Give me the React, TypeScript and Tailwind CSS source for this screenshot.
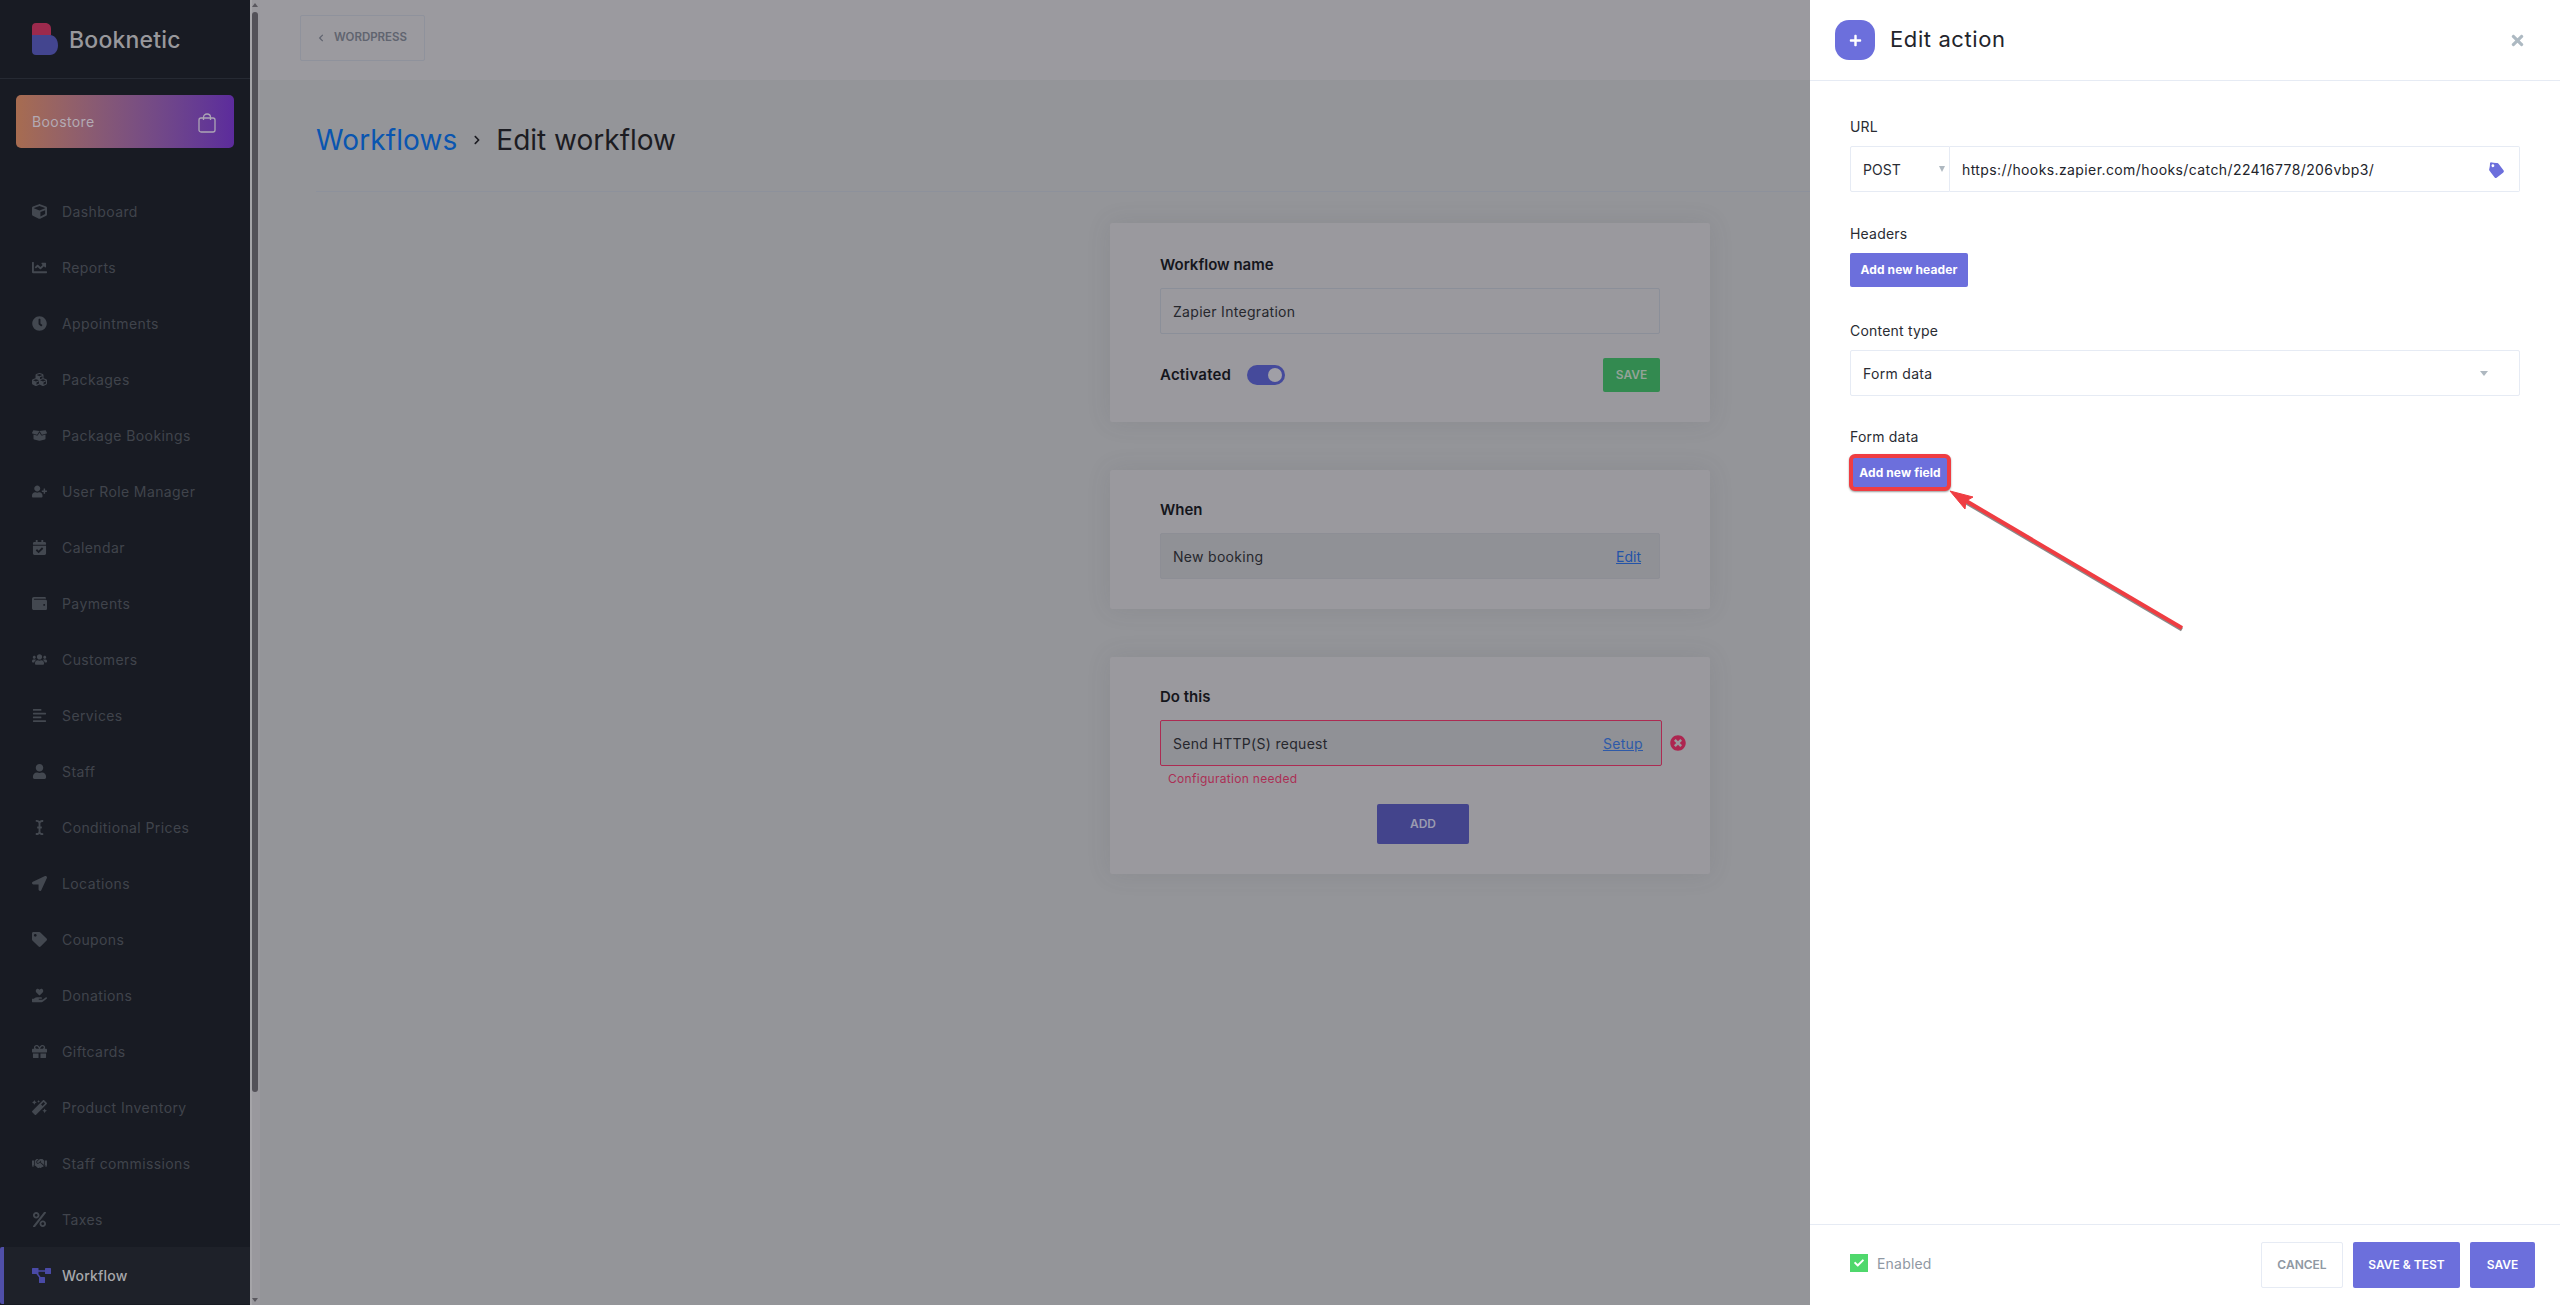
import React from "react";
import {
  FaAlignLeft,
  FaBoxOpen,
  FaCalendarCheck,
  FaChartLine,
  FaChevronLeft,
  FaChevronRight,
  FaClock,
  FaCube,
  FaCubes,
  FaGift,
  FaHandHoldingHeart,
  FaHandshake,
  FaICursor,
  FaLocationArrow,
  FaMagic,
  FaPercent,
  FaPlus,
  FaTag,
  FaTimes,
  FaTimesCircle,
  FaUser,
  FaUserPlus,
  FaUsers,
  FaWallet,
  FaCheck,
} from "react-icons/fa";

const menu = [
  { label: "Dashboard", icon: FaCube },
  { label: "Reports", icon: FaChartLine },
  { label: "Appointments", icon: FaClock },
  { label: "Packages", icon: FaCubes },
  { label: "Package Bookings", icon: FaBoxOpen },
  { label: "User Role Manager", icon: FaUserPlus },
  { label: "Calendar", icon: FaCalendarCheck },
  { label: "Payments", icon: FaWallet },
  { label: "Customers", icon: FaUsers },
  { label: "Services", icon: FaAlignLeft },
  { label: "Staff", icon: FaUser },
  { label: "Conditional Prices", icon: FaICursor },
  { label: "Locations", icon: FaLocationArrow },
  { label: "Coupons", icon: FaTag },
  { label: "Donations", icon: FaHandHoldingHeart },
  { label: "Giftcards", icon: FaGift },
  { label: "Product Inventory", icon: FaMagic },
  { label: "Staff commissions", icon: FaHandshake },
  { label: "Taxes", icon: FaPercent },
];

function Logo() {
  return (
    <svg width="26" height="32" viewBox="0 0 26 32" className="shrink-0">
      <path d="M0 12H18C22 12 26 16 26 22.500C26 28 22.500 32 18 32H4C1.500 32 0 30.500 0 28Z" fill="#43458f" />
      <path d="M0 4C0 1.500 1.500 0 4 0H13C17 0 19 2.500 19 6V12H0Z" fill="#9c2a4d" />
    </svg>
  );
}

function WorkflowIcon() {
  return (
    <svg width="19" height="15" viewBox="0 0 19 15" fill="#4a4aa6">
      <path d="M3 3H16M3 3L10 12" stroke="#4a4aa6" strokeWidth="1.5" />
      <rect x="0" y="0" width="6.500" height="6" rx="0.5" />
      <rect x="13" y="0" width="6" height="6" rx="0.5" />
      <rect x="7" y="9" width="6" height="6" rx="0.5" />
    </svg>
  );
}

function Sidebar() {
  return (
    <aside className="w-[250px] shrink-0 h-full bg-[#181b23] flex flex-col">
      <div className="h-[79px] shrink-0 border-b border-[#262a33] pl-[32px] flex items-center gap-[11px]">
        <Logo />
        <span className="text-[23px] font-medium text-[#98989c] tracking-[0.2px] mt-[2px]">Booknetic</span>
      </div>
      <div className="mx-[16px] mt-[16px] h-[53px] shrink-0 rounded-[5px] bg-gradient-to-r from-[#a76c50] to-[#5c2b9c] flex items-center justify-between pl-[16px] pr-[18px]">
        <span className="text-[14px] text-[#b3aab3] tracking-[0.4px]">Boostore</span>
        <svg width="18" height="20" viewBox="0 0 18 20" fill="none" stroke="#aca5b5" strokeWidth="1.3" className="mt-[3px]">
          <rect x="1" y="5" width="16" height="14" rx="2" />
          <path d="M5.500 7V4.500C5.500 2.500 7 1 9 1s3.500 1.500 3.500 3.500V7" />
        </svg>
      </div>
      <nav className="mt-[35px] flex flex-col">
        {menu.map((item) => (
          <div key={item.label} className="h-[56px] flex items-center pl-[32px]">
            <span className="w-[30px] shrink-0 text-[#434850]">
              <item.icon className="h-[15px] w-auto" />
            </span>
            <span className="text-[14px] text-[#40444c] tracking-[0.4px]">{item.label}</span>
          </div>
        ))}
        <div className="h-[57px] flex items-center pl-[28px] bg-[#1e2129] border-l-[4px] border-[#504fa8] rounded-l-[2px]">
          <span className="w-[30px] shrink-0">
            <WorkflowIcon />
          </span>
          <span className="text-[14px] font-medium text-[#a6a7ab] tracking-[0.2px]">Workflow</span>
        </div>
      </nav>
    </aside>
  );
}

function Scrollbar() {
  return (
    <div className="w-[10px] shrink-0 h-full bg-[#99989d] border-l-[2px] border-[#a5a4a8] flex flex-col items-center">
      <div className="mt-[3px] w-0 h-0 border-x-[3px] border-x-transparent border-b-[4px] border-b-[#5a585f] -ml-[2px]" />
      <div className="mt-[5px] w-[6px] h-[1080px] rounded-[3px] bg-[#535158] self-start" />
      <div className="mt-auto mb-[3px] w-0 h-0 border-x-[3px] border-x-transparent border-t-[4px] border-t-[#5a585f] -ml-[2px]" />
    </div>
  );
}

function Card({ height, children }: { height: string; children: React.ReactNode }) {
  return (
    <section className={`${height} w-[600px] bg-[#9a999e] rounded-[2px] px-[50px] shadow-[0_0_24px_rgba(70,70,80,0.12)]`}>
      {children}
    </section>
  );
}

function Main() {
  return (
    <main className="flex-1 min-w-0 h-full bg-[#949599] flex flex-col">
      <header className="h-[80px] shrink-0 bg-[#9b9a9f] pl-[40px] pt-[15px]">
        <div className="w-[125px] h-[46px] border border-[#8f929c] rounded-[2px] flex items-center pl-[16px] gap-[9px] text-[#60646f]">
          <FaChevronLeft size={8} />
          <span className="text-[11.5px] font-semibold">WORDPRESS</span>
        </div>
      </header>
      <div className="mx-[56px] h-[112px] shrink-0 border-b border-[#8d919b] flex items-start pt-[38px]">
        <span className="text-[28px] leading-[44px] text-[#0a55b0] tracking-[0.1px]">Workflows</span>
        <span className="w-[39px] h-[44px] flex items-center justify-center text-[#1c1c22]">
          <FaChevronRight size={10} />
        </span>
        <span className="text-[28px] leading-[44px] text-[#1c1c22]">Edit workflow</span>
      </div>
      <div className="pt-[31px] flex flex-col items-center gap-[48px]">
        <Card height="h-[199px]">
          <div className="pt-[32px] text-[15px] leading-[20px] font-semibold text-[#15161c]">Workflow name</div>
          <div className="mt-[13px] h-[46px] border border-[#8b8f99] rounded-[2px] flex items-center px-[12px] text-[14px] text-[#26272d] tracking-[0.3px]">
            Zapier Integration
          </div>
          <div className="mt-[24px] flex items-center">
            <span className="text-[15px] font-semibold text-[#15161c] tracking-[0.2px]">Activated</span>
            <span className="ml-[16px] w-[38px] h-[20px] rounded-full bg-[#454a9b] flex items-center justify-end pr-[3px]">
              <span className="w-[14px] h-[14px] rounded-full bg-[#a09fa6]" />
            </span>
            <span className="ml-auto w-[57px] h-[34px] rounded-[2px] bg-[#338a50] flex items-center justify-center text-[12px] font-semibold text-[#94a398]">
              SAVE
            </span>
          </div>
        </Card>
        <Card height="h-[139px]">
          <div className="pt-[30px] text-[15px] leading-[20px] font-semibold text-[#15161c]">When</div>
          <div className="mt-[13px] h-[46px] bg-[#909196] border border-[#8d8e95] rounded-[2px] flex items-center justify-between pl-[12px] pr-[18px] text-[14px] text-[#26272d] tracking-[0.3px]">
            <span>New booking</span>
            <span className="text-[#2353a8] underline tracking-normal">Edit</span>
          </div>
        </Card>
        <Card height="h-[217px]">
          <div className="pt-[30px] text-[15px] leading-[20px] font-semibold text-[#15161c]">Do this</div>
          <div className="mt-[13px] flex items-center">
            <div className="w-[502px] shrink-0 h-[46px] bg-[#909196] border border-[#ac2b52] rounded-[2px] flex items-center justify-between pl-[12px] pr-[18px] text-[14px] text-[#26272d] tracking-[0.3px]">
              <span>Send HTTP(S) request</span>
              <span className="text-[#2e5aa8] underline">Setup</span>
            </div>
            <span className="ml-[8px] text-[#ad2650]">
              <FaTimesCircle size={16} />
            </span>
          </div>
          <div className="mt-[5px] ml-[8px] text-[12px] leading-[16px] text-[#ab2f55] tracking-[0.3px]">Configuration needed</div>
          <div className="mt-[17px] ml-[217px] w-[92px] h-[40px] rounded-[2px] bg-[#43448c] flex items-center justify-center text-[12px] font-semibold text-[#9a9bb0]">
            ADD
          </div>
        </Card>
      </div>
    </main>
  );
}

function FieldLabel({ children }: { children: React.ReactNode }) {
  return <div className="text-[14px] leading-[20px] text-[#2a2c33] tracking-[0.2px]">{children}</div>;
}

function Drawer() {
  return (
    <aside className="absolute top-0 right-0 bottom-0 w-[750px] bg-white flex flex-col">
      <div className="h-[81px] shrink-0 border-b border-[#e6ebf4] pl-[25px] pr-[34px] flex items-center">
        <span className="w-[40px] h-[40px] rounded-[14px] bg-[#6c6fdc] text-white flex items-center justify-center">
          <FaPlus size={13} />
        </span>
        <span className="ml-[15px] mb-[2px] text-[22px] text-[#22242b] tracking-[0.6px]">Edit action</span>
        <FaTimes size={17} className="ml-auto text-[#adb9c2]" />
      </div>
      <div className="relative flex-1 min-h-0 pl-[40px] pr-[40px] pt-[36px]">
        <FieldLabel>URL</FieldLabel>
        <div className="mt-[9px] h-[46px] flex">
          <div className="w-[100px] border border-[#e6ebf4] rounded-l-[2px] flex items-center justify-between pl-[12px] pr-[4px] text-[14px] text-[#2a2c33]">
            <span>POST</span>
            <span className="w-0 h-0 border-x-[3.5px] border-x-transparent border-t-[6px] border-t-[#aeb8c0]" />
          </div>
          <div className="flex-1 border border-l-0 border-[#e6ebf4] rounded-r-[2px] flex items-center justify-between pl-[12px] pr-[15px] text-[14px] text-[#22242b] tracking-[0.4px]">
            <span>https://hooks.zapier.com/hooks/catch/22416778/206vbp3/</span>
            <FaTag size={15} className="text-[#6c6fdc] rotate-[8deg] mt-[2px]" />
          </div>
        </div>
        <div className="mt-[32px]">
          <FieldLabel>Headers</FieldLabel>
        </div>
        <div className="mt-[9px] w-[118px] h-[34px] rounded-[2px] bg-[#6c6fdc] flex items-center justify-center text-[12px] font-bold text-white tracking-[0.1px]">
          Add new header
        </div>
        <div className="mt-[34px]">
          <FieldLabel>Content type</FieldLabel>
        </div>
        <div className="mt-[9px] h-[46px] border border-[#e6ebf4] rounded-[2px] flex items-center justify-between pl-[12px] pr-[31px] text-[14px] text-[#2a2c33] tracking-[0.3px]">
          <span>Form data</span>
          <span className="w-0 h-0 border-x-[4px] border-x-transparent border-t-[5px] border-t-[#aeb8c0]" />
        </div>
        <div className="mt-[31px]">
          <FieldLabel>Form data</FieldLabel>
        </div>
        <div className="mt-[7px] -ml-[1px] w-[102px] h-[37px] rounded-[6px] border-[4px] border-[#ef3d42] bg-[#6c6fdc] flex items-center justify-center text-[12px] font-bold text-white tracking-[0.1px] shadow-[0_1px_2px_rgba(0,0,0,0.4)]">
          Add new field
        </div>
        {/* annotation arrow over the form */}
        <svg className="absolute left-[130px] top-[400px]" width="250" height="155" viewBox="0 0 250 155" fill="none">
          <path d="M22 19L242 148.500" stroke="#8a8a8a" strokeWidth="4" />
          <path d="M22 17.500L242 147" stroke="#ef3d42" strokeWidth="4" />
          <path d="M10 10L33 16L26 20L25 28Z" fill="#ef3d42" stroke="#ef3d42" strokeWidth="1" />
        </svg>
      </div>
      <div className="h-[81px] shrink-0 border-t border-[#e6ebf4] pl-[40px] pr-[25px] flex items-center">
        <div className="flex items-center mb-[4px]">
          <span className="w-[18px] h-[18px] bg-[#4fd86c] text-white flex items-center justify-center">
            <FaCheck size={10} />
          </span>
          <span className="ml-[9px] text-[14px] text-[#8f98a3] tracking-[0.2px]">Enabled</span>
        </div>
        <div className="ml-auto flex gap-[10px]">
          <span className="w-[82px] h-[46px] border border-[#e6ebf4] rounded-[2px] flex items-center justify-center text-[12px] font-semibold text-[#8f98a3]">
            CANCEL
          </span>
          <span className="w-[107px] h-[46px] rounded-[2px] bg-[#6c6fdc] flex items-center justify-center text-[12px] font-semibold text-white">
            SAVE &amp; TEST
          </span>
          <span className="w-[65px] h-[46px] rounded-[2px] bg-[#6c6fdc] flex items-center justify-center text-[12px] font-semibold text-white">
            SAVE
          </span>
        </div>
      </div>
    </aside>
  );
}

export default function App() {
  return (
    <div className="relative h-screen w-full flex overflow-hidden font-['Inter',sans-serif]">
      <Sidebar />
      <Scrollbar />
      <Main />
      <Drawer />
    </div>
  );
}
